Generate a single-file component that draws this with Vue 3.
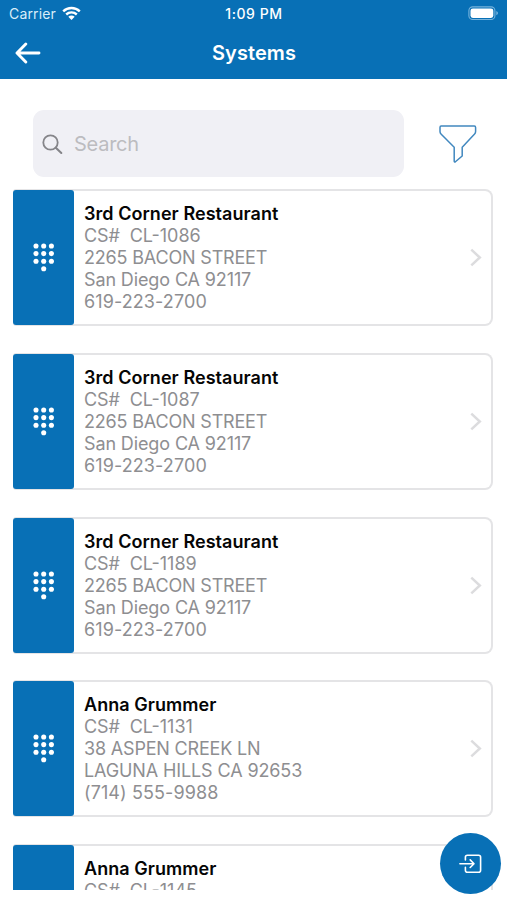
<script setup>
const systems = [
  { name: '3rd Corner Restaurant', cs: 'CL-1086', street: '2265 BACON STREET', city: 'San Diego CA 92117', phone: '619-223-2700' },
  { name: '3rd Corner Restaurant', cs: 'CL-1087', street: '2265 BACON STREET', city: 'San Diego CA 92117', phone: '619-223-2700' },
  { name: '3rd Corner Restaurant', cs: 'CL-1189', street: '2265 BACON STREET', city: 'San Diego CA 92117', phone: '619-223-2700' },
  { name: 'Anna Grummer', cs: 'CL-1131', street: '38 ASPEN CREEK LN', city: 'LAGUNA HILLS CA 92653', phone: '(714) 555-9988' },
  { name: 'Anna Grummer', cs: 'CL-1145', street: '38 ASPEN CREEK LN', city: 'LAGUNA HILLS CA 92653', phone: '(714) 555-9988' },
]
const dots = [
  [3, 3], [10.7, 3], [18.4, 3],
  [3, 10.6], [10.7, 10.6], [18.4, 10.6],
  [3, 18.2], [10.7, 18.2], [18.4, 18.2],
  [10.7, 25.8],
]
</script>

<template>
  <div class="screen">
    <header class="header">
      <div class="status">
        <div class="carrier">
          <span>Carrier</span>
          <svg width="19" height="15" viewBox="0 0 19 15" fill="none" stroke="#fff" stroke-width="2.4">
            <path d="M1.2 5.3C5.9.8 13.1.8 17.8 5.3" />
            <path d="M4.2 8.5C7.2 5.7 11.8 5.7 14.8 8.5" />
            <path d="M9.5 14L6.3 10.8C8.2 9.2 10.8 9.2 12.7 10.8Z" fill="#fff" stroke="none" />
          </svg>
        </div>
        <span class="time">1:09 PM</span>
        <svg class="battery" width="31" height="15" viewBox="0 0 31 15">
          <rect x=".9" y=".9" width="26" height="12.6" rx="3.8" fill="none" stroke="#76b3dc" stroke-width="1.1" />
          <rect x="2.5" y="2.5" width="22.8" height="9.4" rx="2.3" fill="#fff" />
          <path d="M28.3 5.1c2.2.8 2.2 3.4 0 4.2z" fill="#76b3dc" />
        </svg>
      </div>
      <div class="nav">
        <svg width="26" height="22" viewBox="0 0 26 22" fill="none" stroke="#fff" stroke-width="2.9" stroke-linecap="round" stroke-linejoin="round">
          <path d="M24 11H2.3M10.8 2L2 11l8.8 9" />
        </svg>
        <h1>Systems</h1>
      </div>
    </header>

    <div class="tools">
      <div class="search">
        <svg width="21" height="21" viewBox="0 0 21 21" fill="none" stroke="#858589" stroke-width="1.8" stroke-linecap="round">
          <circle cx="8.5" cy="8.5" r="7.2" />
          <path d="M13.8 13.8L19.3 19" stroke-width="2.1" />
        </svg>
        <span>Search</span>
      </div>
      <svg class="filter" width="38" height="38" viewBox="0 0 38 38" fill="none" stroke="#4188bf" stroke-width="1.5" stroke-linejoin="round">
        <path d="M2.1 1H35.3Q36.6 1 36.6 2.4V6.5Q36.6 8 35.6 9L23.2 22.2V31L16.4 36.8Q15.2 37.6 15.2 36V22.2L2 9Q1 8 1 6.5V2.4Q1 1 2.1 1Z" />
      </svg>
    </div>

    <main class="list">
      <article v-for="item in systems" :key="item.cs" class="card">
        <div class="pad">
          <svg width="22" height="29" viewBox="0 0 22 29" fill="#fff">
            <circle v-for="(d, i) in dots" :key="i" :cx="d[0]" :cy="d[1]" r="2.55" />
          </svg>
        </div>
        <div class="info">
          <h2>{{ item.name }}</h2>
          <p class="cs"><span class="label">CS#</span><span>{{ item.cs }}</span></p>
          <p class="address">{{ item.street }}</p>
          <p class="address city">{{ item.city }}</p>
          <p class="phone">{{ item.phone }}</p>
        </div>
        <svg class="chevron" width="12" height="19" viewBox="0 0 12 19" fill="none" stroke="#dcdcde" stroke-width="2.5">
          <path d="M1.3 1.7L9.8 9.5L1.3 17.3" />
        </svg>
      </article>
    </main>

    <button class="fab" aria-label="Sign in">
      <svg width="24" height="20" viewBox="0 0 24 20" fill="none" stroke="#fff" stroke-width="1.6" stroke-linecap="round" stroke-linejoin="round">
        <path d="M6.4 6V3.2Q6.4 1.2 8.4 1.2H19.6Q21.6 1.2 21.6 3.2V16.2Q21.6 18.2 19.6 18.2H8.4Q6.4 18.2 6.4 16.2V13.4" />
        <path d="M.9 9.7H14.8M11.2 5.9L15 9.7L11.2 13.5" />
      </svg>
    </button>
  </div>
</template>

<style>
body {
  margin: 0;
  background: #fff;
}
</style>

<style scoped>
.screen {
  position: relative;
  display: flex;
  flex-direction: column;
  width: 507px;
  height: 900px;
  overflow: hidden;
  background: #fff;
  font-family: Inter, "Liberation Sans", sans-serif;
}
h1, h2, p {
  margin: 0;
}
svg {
  display: block;
  flex: none;
}
.header {
  flex: none;
  box-sizing: border-box;
  height: 79px;
  background: #0870b6;
  color: #fff;
}
.status {
  display: grid;
  grid-template-columns: 1fr auto 1fr;
  align-items: center;
  height: 27px;
  padding: 0 8px 0 9px;
  font-size: 14px;
}
.carrier {
  display: flex;
  align-items: center;
  gap: 6px;
  color: #d9edf9;
  letter-spacing: 0.15px;
}
.time {
  font-weight: 550;
  font-size: 14px;
  letter-spacing: 0.55px;
}
.battery {
  justify-self: end;
}
.nav {
  display: grid;
  grid-template-columns: 1fr auto 1fr;
  align-items: center;
  height: 51px;
  padding: 0 14px 0 15px;
}
.nav h1 {
  font-size: 20px;
  font-weight: 570;
  line-height: 24px;
  letter-spacing: 0.1px;
}
.tools {
  flex: none;
  display: flex;
  align-items: center;
  gap: 35px;
  padding: 31px 0 12px 33px;
}
.search {
  display: flex;
  align-items: center;
  gap: 11px;
  box-sizing: border-box;
  width: 371px;
  height: 67px;
  padding: 1px 0 0 9px;
  border-radius: 11px;
  background: #f0f0f5;
  color: #bcbcc0;
  font-size: 20px;
  letter-spacing: -0.25px;
}
.list {
  flex: none;
  display: flex;
  flex-direction: column;
  gap: 26.75px;
  height: 701px;
  padding: 0 14px 0 13px;
  overflow: hidden;
}
.card {
  flex: none;
  display: flex;
  align-items: center;
  box-sizing: border-box;
  height: 137px;
  padding-right: 9px;
  border: solid #e4e4e6;
  border-width: 2px 2px 2px 0;
  border-radius: 3px 8px 8px 3px;
}
.pad {
  flex: none;
  display: flex;
  align-items: center;
  justify-content: center;
  width: 61px;
  height: 135px;
  border-radius: 3px;
  background: #0870b6;
}
.info {
  flex: 1;
  padding: 1px 0 0 10px;
  color: #8e8e91;
  font-size: 18px;
  line-height: 22px;
  white-space: nowrap;
}
.info h2 {
  color: #050505;
  font-size: 18px;
  font-weight: 600;
  line-height: 22px;
  letter-spacing: 0.05px;
}
.cs {
  display: flex;
  gap: 10px;
}
.label {
  letter-spacing: -0.15px;
}
.address {
  letter-spacing: -0.18px;
}
.city {
  letter-spacing: -0.12px;
}
.phone {
  letter-spacing: 0.1px;
}
.fab {
  position: absolute;
  right: 6px;
  bottom: 6px;
  display: flex;
  align-items: center;
  justify-content: center;
  width: 61px;
  height: 61px;
  padding: 0;
  border: 0;
  border-radius: 50%;
  background: #0870b6;
}
</style>
